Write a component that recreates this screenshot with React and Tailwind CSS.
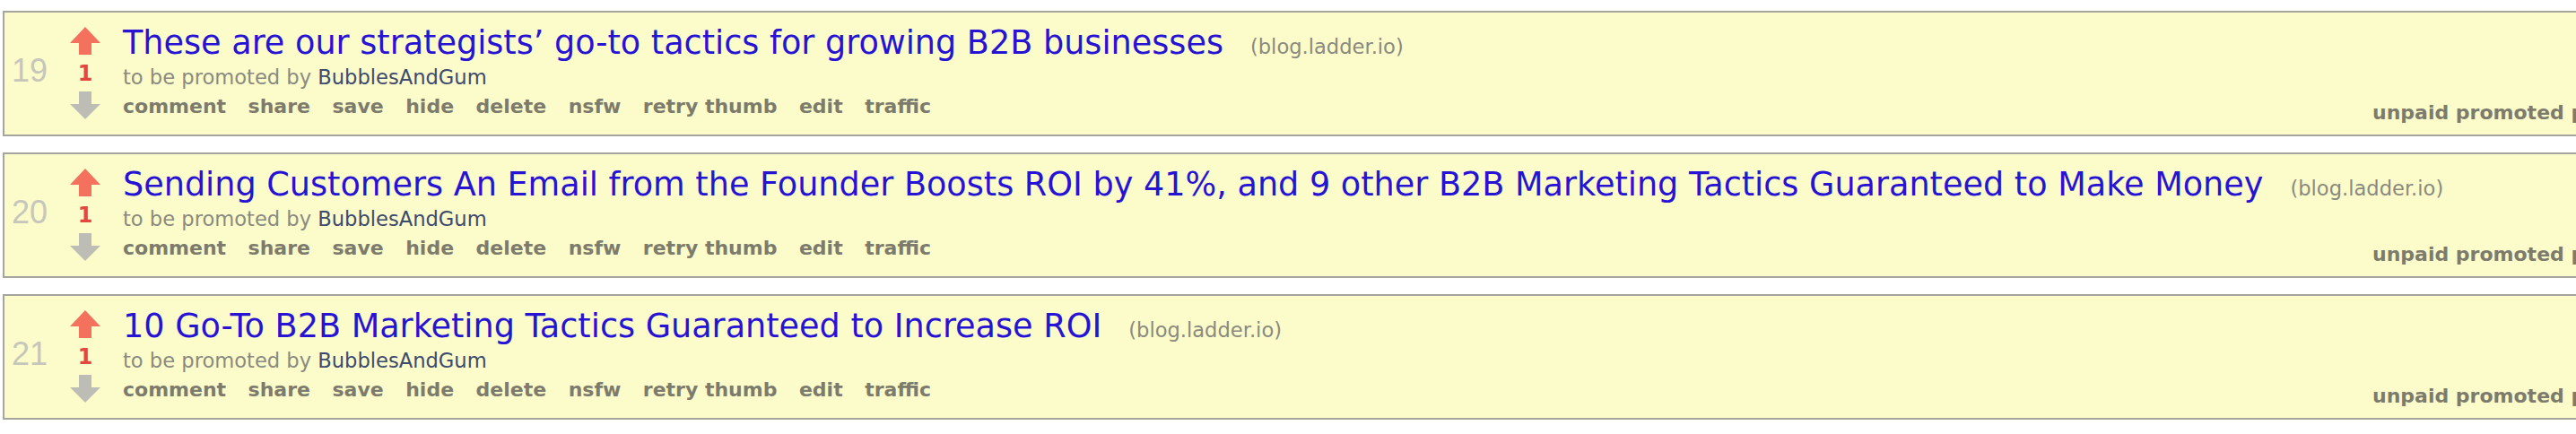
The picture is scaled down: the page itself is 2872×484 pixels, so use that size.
import React from "react";

const rows = [
  { rank: 19, title: "These are our strategists’ go-to tactics for growing B2B businesses" },
  {
    rank: 20,
    title:
      "Sending Customers An Email from the Founder Boosts ROI by 41%, and 9 other B2B Marketing Tactics Guaranteed to Make Money",
  },
  { rank: 21, title: "10 Go-To B2B Marketing Tactics Guaranteed to Increase ROI" },
];

const buttons = ["comment", "share", "save", "hide", "delete", "nsfw", "retry thumb", "edit", "traffic"];

function UpArrow() {
  return (
    <svg width="34" height="31" viewBox="0 0 34 31" className="block">
      <polygon points="17,0 34,18 24,18 24,31 10,31 10,18 0,18" fill="#f4715d" />
    </svg>
  );
}

function DownArrow() {
  return (
    <svg width="34" height="31" viewBox="0 0 34 31" className="block">
      <polygon points="10,0 24,0 24,14 34,14 17,31 0,14 10,14" fill="#bdbdb5" />
    </svg>
  );
}

function Row({ rank, title }) {
  return (
    <div className="ml-[3px] w-[2934px] h-[140px] shrink-0 border-2 border-[#a5a59d] bg-[#fcfcca] flex items-start">
      <div className="w-[48px] shrink-0 mt-[47px] text-right font-['Liberation_Sans',Arial,sans-serif] text-[36px] leading-none text-[#c6c6ba]">
        {rank}
      </div>
      <div className="ml-[25px] w-[34px] shrink-0 mt-[16px] flex flex-col items-center">
        <UpArrow />
        <div className="mt-[9px] font-['DejaVu_Sans',sans-serif] font-bold text-[24px] leading-none text-[#e2483f]">
          1
        </div>
        <div className="mt-[8px]">
          <DownArrow />
        </div>
      </div>
      <div className="ml-[25px] flex-1 min-w-0 mt-[16px] font-['DejaVu_Sans',sans-serif]">
        <div className="flex items-baseline whitespace-nowrap">
          <a className="text-[36.6px] leading-none text-[#2613d4]">{title}</a>
          <span className="ml-[30px] text-[22.6px] leading-none text-[#8a8a80]">(blog.ladder.io)</span>
        </div>
        <div className="mt-[8px] text-[22.6px] leading-none text-[#8a8a80] whitespace-nowrap">
          to be promoted by <a className="text-[#3d4b6e]">BubblesAndGum</a>
        </div>
        <div className="mt-[11px] flex items-start text-[22px] leading-none font-bold text-[#7c7b6c] whitespace-nowrap">
          <div className="flex gap-[24.5px]">
            {buttons.map((b) => (
              <span key={b}>{b}</span>
            ))}
          </div>
          <div className="ml-auto w-[290px] shrink-0 mt-[7px]">unpaid promoted post</div>
        </div>
      </div>
    </div>
  );
}

export default function App() {
  return (
    <div className="w-[2872px] h-[484px] overflow-hidden bg-white pt-[12px] flex flex-col gap-[18px]">
      {rows.map((r) => (
        <Row key={r.rank} {...r} />
      ))}
    </div>
  );
}
